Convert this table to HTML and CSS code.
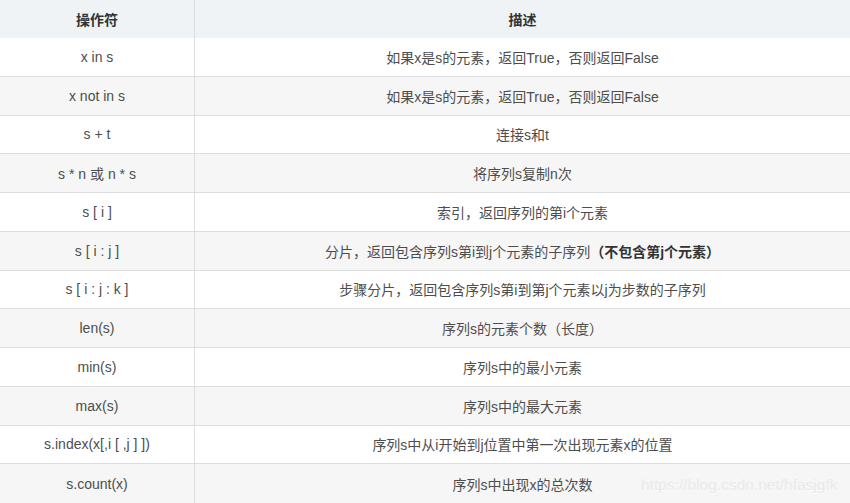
FILE: index.html
```html
<!DOCTYPE html>
<html lang="zh-CN">
<head>
<meta charset="utf-8">
<title>序列操作符</title>
<link rel="stylesheet" href="styles.css">
</head>
<body>
<div class="wrap">
  <div class="grid">
    <div class="cell head c1">操作符</div>
    <div class="cell head c2">描述</div>

    <div class="cell c1">x in s</div>
    <div class="cell c2">如果x是s的元素，返回True，否则返回False</div>

    <div class="cell c1 alt">x not in s</div>
    <div class="cell c2 alt">如果x是s的元素，返回True，否则返回False</div>

    <div class="cell c1">s + t</div>
    <div class="cell c2">连接s和t</div>

    <div class="cell c1 alt">s * n 或 n * s</div>
    <div class="cell c2 alt">将序列s复制n次</div>

    <div class="cell c1">s [ i ]</div>
    <div class="cell c2">索引，返回序列的第i个元素</div>

    <div class="cell c1 alt">s [ i : j ]</div>
    <div class="cell c2 alt">分片，返回包含序列s第i到j个元素的子序列<b>（不包含第j个元素）</b></div>

    <div class="cell c1">s [ i : j : k ]</div>
    <div class="cell c2">步骤分片，返回包含序列s第i到第j个元素以j为步数的子序列</div>

    <div class="cell c1 alt">len(s)</div>
    <div class="cell c2 alt">序列s的元素个数（长度）</div>

    <div class="cell c1">min(s)</div>
    <div class="cell c2">序列s中的最小元素</div>

    <div class="cell c1 alt">max(s)</div>
    <div class="cell c2 alt">序列s中的最大元素</div>

    <div class="cell c1">s.index(x[,i [ ,j ] ])</div>
    <div class="cell c2">序列s中从i开始到j位置中第一次出现元素x的位置</div>

    <div class="cell c1 alt last">s.count(x)</div>
    <div class="cell c2 alt last">序列s中出现x的总次数</div>
  </div>
  <div class="watermark">https://blog.csdn.net/hfasjgfk</div>
</div>
</body>
</html>
```

FILE: styles.css
```css
html, body {
  margin: 0;
  padding: 0;
  background: #ffffff;
}
.wrap {
  position: relative;
  width: 850px;
  height: 503px;
  overflow: hidden;
}
.grid {
  display: grid;
  grid-template-columns: 195px 655px;
  grid-template-rows: 38px repeat(12, 38.75px);
  font-family: "Liberation Sans", "Noto Sans CJK SC", sans-serif;
  font-size: 14px;
  color: #4d4d4d;
}
.cell {
  display: flex;
  align-items: center;
  justify-content: center;
  box-sizing: border-box;
  border-bottom: 1px solid #dddddd;
  white-space: nowrap;
}
.c1 {
  border-right: 1px solid #dddddd;
}
.head {
  background: #eff3f5;
  font-weight: bold;
  color: #333333;
  border-bottom: none;
}
.alt {
  background: #f6f6f6;
}
.last {
  border-bottom: none;
}
.cell b {
  color: #333333;
}
.watermark {
  position: absolute;
  left: 641px;
  top: 476px;
  font-family: "Liberation Sans", sans-serif;
  font-size: 15.5px;
  color: #e9e9e9;
  text-shadow: 0 1px 0 #fbfbfb;
}
```
